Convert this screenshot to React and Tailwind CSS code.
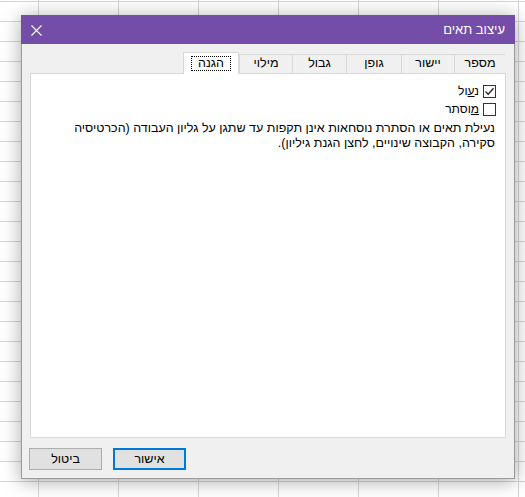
import React from "react";

const tabs = [
  { label: "מספר", w: "w-[51px]" },
  { label: "יישור", w: "w-[53px]" },
  { label: "גופן", w: "w-[55px]" },
  { label: "גבול", w: "w-[54px]" },
  { label: "מילוי", w: "w-[53px]" },
];

function Checkbox({ checked }) {
  return (
    <span className="w-[13px] h-[13px] border border-[#333] bg-white flex items-center justify-center shrink-0">
      {checked && (
        <svg width="11" height="11" viewBox="0 0 11 11">
          <path d="M1.5 5.5 L4.2 8.2 L9.5 2.2" fill="none" stroke="#222" strokeWidth="1.3" />
        </svg>
      )}
    </span>
  );
}

export default function App() {
  return (
    <div className="relative w-[525px] h-[497px] overflow-hidden bg-white bg-[linear-gradient(to_right,#d6d6d6_1px,transparent_1px),linear-gradient(to_bottom,#d6d6d6_1px,transparent_1px)] bg-[length:80px_20px] bg-[position:38px_1px] font-['Liberation_Sans','DejaVu_Sans',sans-serif] text-[12px] text-black">
      <div
        dir="rtl"
        className="absolute left-[21px] top-[15px] w-[494px] h-[464px] flex flex-col shadow-[0_2px_18px_rgba(0,0,0,0.35)]"
      >
        {/* title bar */}
        <div className="h-[29px] bg-[#744da9] flex items-center justify-between pr-[10px] pl-[10px] text-white shrink-0">
          <span className="text-[13px] pt-[1px]">עיצוב תאים</span>
          <svg width="11" height="11" viewBox="0 0 11 11" className="mt-[1px]">
            <path d="M0.5 0.5 L10.5 10.5 M10.5 0.5 L0.5 10.5" stroke="#fff" strokeWidth="1.1" />
          </svg>
        </div>
        {/* body */}
        <div className="flex-1 bg-[#f0f0f0] border-x border-b border-[#9a9a9a] flex flex-col px-[8px] pb-[8px]">
          {/* tabs */}
          <div className="flex items-end h-[29px] pr-[1px] shrink-0">
            {tabs.map((t) => (
              <div
                key={t.label}
                className={`${t.w} h-[19px] border-t border-l border-[#d9d9d9] bg-[#f0f0f0] flex items-center justify-center text-[12.5px] pb-[1px]`}
              >
                {t.label}
              </div>
            ))}
            <div className="w-[56px] h-[22px] -mb-[1px] relative z-10 bg-white border-t border-x border-[#d9d9d9] flex items-start justify-center pt-[3px]">
              <span className="border border-dotted border-black px-[6px] leading-[13px] text-[12.5px]">הגנה</span>
            </div>
          </div>
          {/* panel */}
          <div className="flex-1 bg-white border border-[#d9d9d9] flex flex-col pt-[11px] pr-[9px] pl-[10px]">
            <label className="flex items-center gap-[4px] h-[13px]">
              <Checkbox checked />
              <span className="leading-[13px]">
                נ<span className="underline">ע</span>ול
              </span>
            </label>
            <label className="flex items-center gap-[4px] h-[13px] mt-[5px]">
              <Checkbox />
              <span className="leading-[13px]">
                <span className="underline">מ</span>וסתר
              </span>
            </label>
            <p className="mt-[5px] leading-[15px] pr-[1px] text-[12.5px]">
              נעילת תאים או הסתרת נוסחאות אינן תקפות עד שתגן על גליון העבודה (הכרטיסיה
              <br />
              סקירה, הקבוצה שינויים, לחצן הגנת גיליון).
            </p>
          </div>
          {/* buttons */}
          <div className="flex justify-end gap-[11px] mt-[10px] pl-[-1px] shrink-0">
            <button className="w-[73px] h-[22px] bg-[#e1e1e1] border-2 border-[#0078d7] text-[12.5px] flex items-center justify-center">
              אישור
            </button>
            <button className="w-[73px] h-[22px] bg-[#e1e1e1] border border-[#adadad] text-[12.5px] flex items-center justify-center ml-[-1px]">
              ביטול
            </button>
          </div>
        </div>
      </div>
    </div>
  );
}
